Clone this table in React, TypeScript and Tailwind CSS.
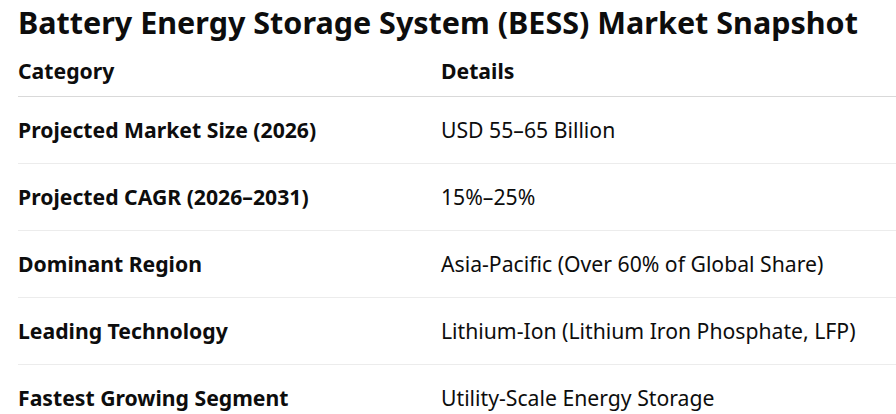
const rows = [
  ["Projected Market Size (2026)", "USD 55–65 Billion"],
  ["Projected CAGR (2026–2031)", "15%–25%"],
  ["Dominant Region", "Asia-Pacific (Over 60% of Global Share)"],
  ["Leading Technology", "Lithium-Ion (Lithium Iron Phosphate, LFP)"],
  ["Fastest Growing Segment", "Utility-Scale Energy Storage"],
];

export default function App() {
  return (
    <div className="h-[414px] w-[896px] overflow-hidden bg-white pl-[18px] text-[#0d0d0d] font-['Noto_Sans',sans-serif]">
      <h1 className="pt-[4px] text-[30.5px] font-bold leading-[36px] whitespace-nowrap">
        Battery Energy Storage System (BESS) Market Snapshot
      </h1>
      <table className="mt-[14px] w-[1000px] border-collapse text-left text-[21.2px]">
        <thead>
          <tr className="border-b border-[#d9d9d9]">
            <th className="w-[423px] pb-[8px] font-bold leading-[34px]">Category</th>
            <th className="pb-[8px] font-bold leading-[34px]">Details</th>
          </tr>
        </thead>
        <tbody>
          {rows.map(([cat, det], i) => (
            <tr key={cat} className={i < rows.length - 1 ? "border-b border-[#ececec]" : ""}>
              <td className="h-[67px] font-bold whitespace-nowrap">{cat}</td>
              <td className="h-[67px] whitespace-nowrap">{det}</td>
            </tr>
          ))}
        </tbody>
      </table>
    </div>
  );
}
